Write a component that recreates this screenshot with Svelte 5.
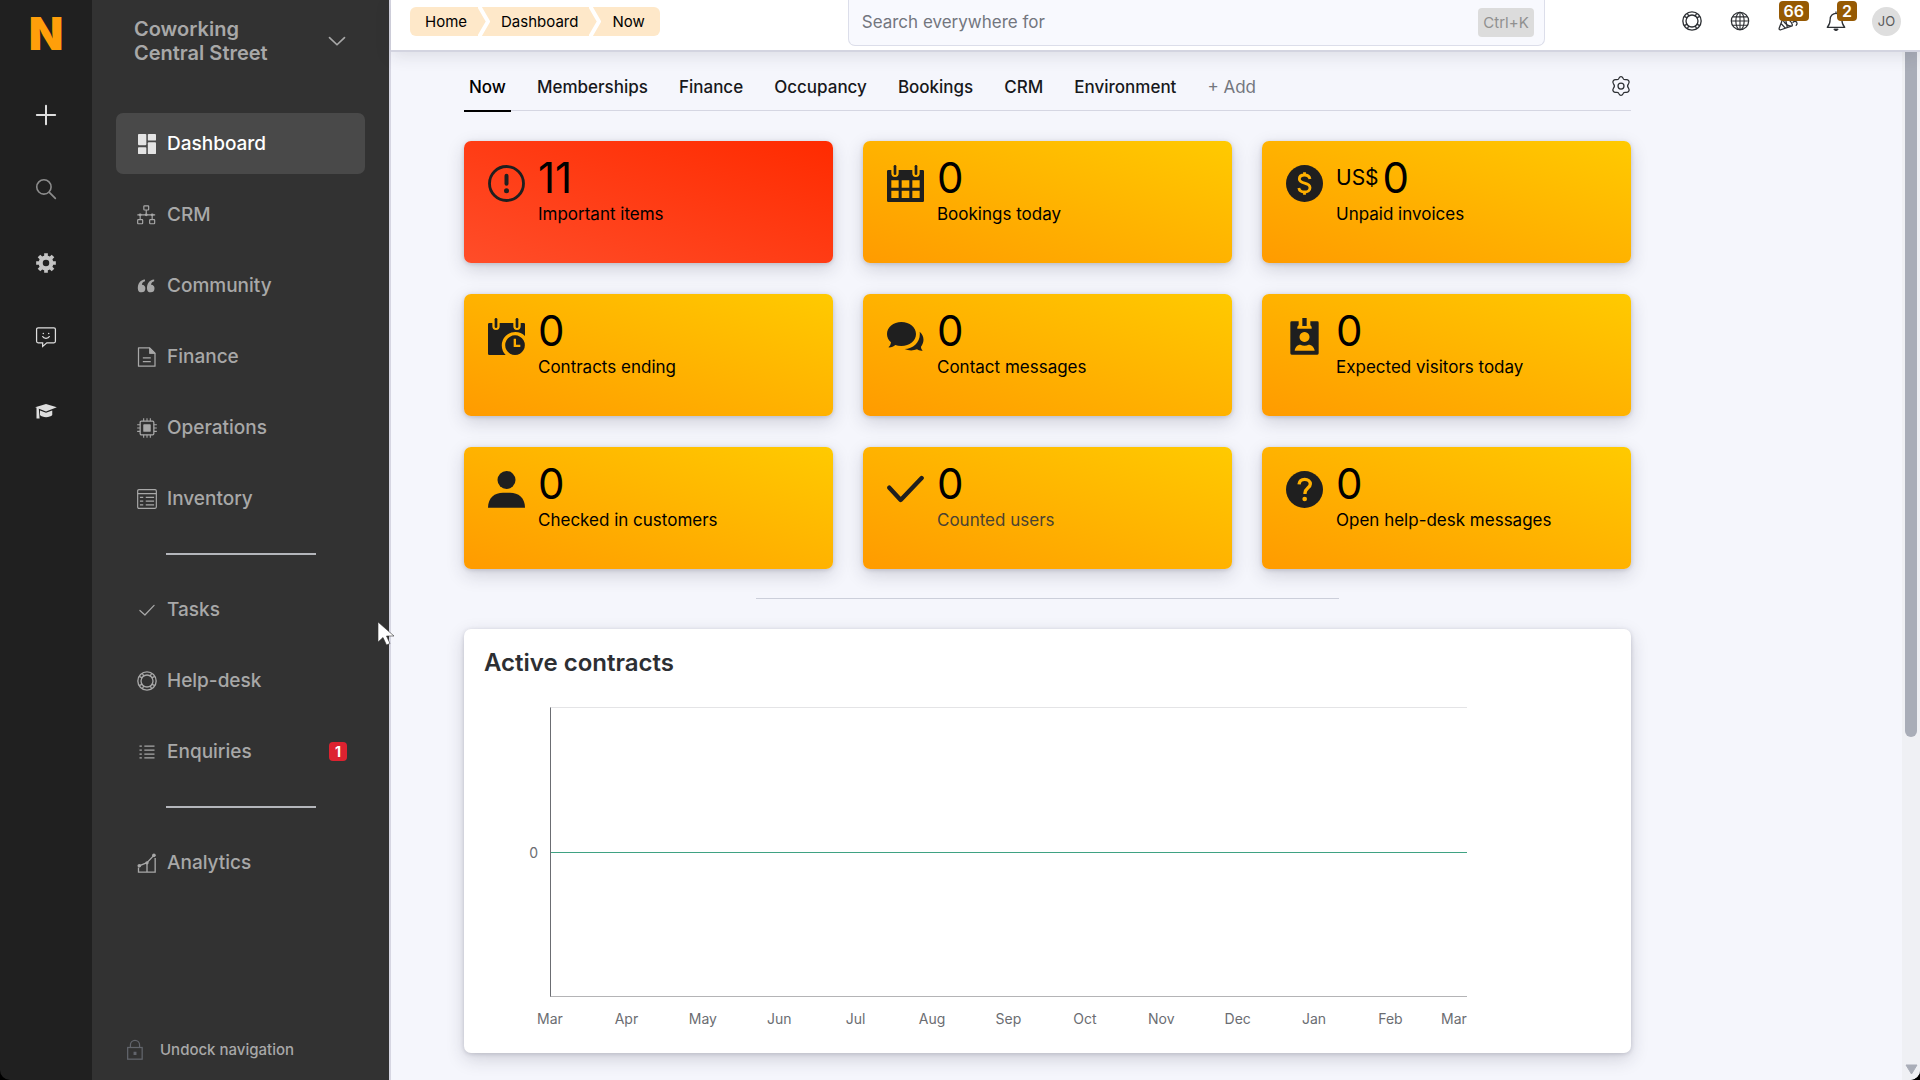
<script>
  const icons = {
    plus: '<path d="M12 1v22M1 12h22" stroke-width="2.4" stroke-linecap="round"/>',
    search: '<circle cx="9.5" cy="9.5" r="8.6" stroke-width="1.9"/><path d="M16 16l7.2 7.2" stroke-width="2" stroke-linecap="round"/>',
    gearSolid: '<circle cx="12" cy="12" r="6.4" stroke-width="5"/><path d="M12 0.200v4M12 19.800v4M0.200 12h4M19.800 12h4M3.600 3.600l2.900 2.900M17.500 17.500l2.900 2.900M3.600 20.400l2.900-2.900M17.500 6.500l2.900-2.900" stroke-width="4.400"/>',
    smile: '<path d="M2.500 1h19A1.800 1.800 0 0 1 23.300 2.800v14.400A1.800 1.800 0 0 1 21.500 19H13l-5 4.300V19H2.500A1.800 1.800 0 0 1 .7 17.200V2.800A1.800 1.800 0 0 1 2.500 1z" stroke-width="1.500"/><path d="M8 11.500c1.200 2.800 6.800 2.800 8 0" stroke-width="1.500" stroke-linecap="round"/><circle cx="8.800" cy="7.800" r=".9" fill="currentColor" stroke="none"/><circle cx="15.200" cy="7.800" r=".9" fill="currentColor" stroke="none"/>',
    cap: '<g fill="currentColor" stroke="none"><path d="M12 3.500L25 7.600 12 12.500 -1 7.600z"/><path d="M4.800 11.500l7.200 2.700 7.500-2.700v5.300c-2.500 3.400-12.200 3.400-14.700 0z"/><path d="M.6 8.500h2.700l1 12.500H.6z"/></g>',
    dashboard: '<g fill="currentColor" stroke="none"><rect x="1.200" y="0" width="10" height="13.400" rx="1"/><rect x="1.200" y="15.800" width="10" height="8.200" rx="1"/><rect x="13" y="0" width="9.800" height="7.800" rx="1"/><rect x="13" y="10" width="9.800" height="14" rx="1"/></g>',
    crm: '<g stroke-width="1.400"><rect x="8.200" y="1" width="5.800" height="5" rx=".8"/><rect x=".8" y="17.500" width="6" height="5" rx=".8"/><rect x="15.200" y="17.500" width="6" height="5" rx=".8"/><path d="M11.100 6v5.800M.4 11.800h21.400M3.800 11.800v5.700M18.200 11.800v5.700"/></g><g fill="currentColor" stroke="none"><circle cx="3.800" cy="11.800" r="1.700"/><circle cx="11.100" cy="11.800" r="1.700"/><circle cx="18.200" cy="11.800" r="1.700"/></g>',
    quote: '<g fill="currentColor" stroke="none"><path d="M9.600 4.200v2.200C7.300 7 6 8.400 5.900 10.600A4.500 4.500 0 1 1 1 15.200C.8 9.400 3.600 4.800 9.600 4.200z"/><path d="M20.600 4.200v2.200c-2.300.6-3.600 2-3.700 4.200a4.500 4.500 0 1 1-4.900 4.600C11.800 9.400 14.600 4.800 20.600 4.200z"/></g>',
    doc: '<path d="M1.800 1h13.400l6.400 6.400V23H1.800z" stroke-width="1.500" stroke-linejoin="round"/><path d="M15 1v6.800h6.600z" fill="currentColor"/><path d="M7 13h9.500M7 17.500h9.500" stroke-width="1.400"/>',
    chip: '<rect x="3.800" y="3.800" width="16.400" height="16.400" rx="1.500" stroke-width="1.500"/><rect x="7.500" y="7.500" width="9" height="9" rx="1" fill="currentColor" stroke="none"/><path d="M8 .2v3.600M12 .2v3.600M16 .2v3.600M8 20.200v3.600M12 20.200v3.600M16 20.200v3.600M.2 8h3.600M.2 12h3.600M.2 16h3.600M20.200 8h3.600M20.200 12h3.600M20.200 16h3.600" stroke-width="1.300"/>',
    table: '<rect x=".8" y=".8" width="22.400" height="22.400" rx="1.500" stroke-width="1.400"/><path d="M.8 5.600h22.400M3.500 10h4M10.500 10h10M3.500 14.500h4M10.500 14.500h10M3.500 19h4M10.500 19h10" stroke-width="1.400"/>',
    tick: '<path d="M3.500 12.500l6 5.500L20.500 6.500" stroke-width="1.500" stroke-linecap="round" stroke-linejoin="round"/>',
    buoy: '<circle cx="12" cy="12" r="11" stroke-width="1.600"/><circle cx="12" cy="12" r="7.200" stroke-width="1.600"/><path d="M2.600 6.400l3.800 1.800M6.400 2.600l1.800 3.800M21.400 6.400l-3.800 1.800M17.600 2.600l-1.800 3.800M2.600 17.600l3.800-1.800M6.400 21.400l1.800-3.800M21.400 17.600l-3.800-1.800M17.600 21.400l-1.800-3.800" stroke-width="1.600"/>',
    list: '<path d="M3 5h2.800M8.800 5H21M3 9.700h2.800M8.800 9.700H21M3 14.400h2.800M8.800 14.400H21M3 19.100h2.800M8.800 19.100H21" stroke-width="1.500"/>',
    chart: '<path d="M1.800 17.500v5.400h20V6M12 22.800V13M2.500 15.500L12 11.600l8.500-9" stroke-width="1.600"/><g fill="currentColor" stroke="none"><circle cx="2.800" cy="15.300" r="2.200"/><circle cx="12" cy="11.800" r="2"/><circle cx="20.300" cy="2.800" r="2.200"/></g>',
    lock: '<rect x="3.200" y="9" width="17.400" height="14" stroke-width="1.500"/><path d="M6.500 9V6a5.500 5.500 0 0 1 11 0v3" stroke-width="1.500"/><path d="M12 14v4" stroke-width="3.500"/>',
    chevron: '<path d="M3 8l9 8.500L21 8" stroke-width="2" stroke-linecap="round" stroke-linejoin="round"/>',
    globe: '<circle cx="12" cy="12" r="10.400" stroke-width="1.500"/><ellipse cx="12" cy="12" rx="5" ry="10.400" stroke-width="1.400"/><path d="M1.600 12h20.800M3 7h18M3 17h18M12 1.600v20.800" stroke-width="1.300"/>',
    party: '<path d="M5.500 10L1.500 20.500c-.6 1.600.5 2.600 2 2l12.700-4.300M5.500 10c2 4.400 6.200 8 10.700 8.200M5.500 10c.3-2 2-2.500 3.800-1.600 4 2 7.300 5.600 7.900 8.100.2 1-.2 1.500-1 1.700M3.600 15l5.200 5.600M18 13.500c1.500-1.500 3.500-1.200 4.500 0 .7 1 .4 2.600-.7 3.800M9.500 12l1.500 7" stroke-width="1.500" stroke-linecap="round"/>',
    bell: '<path d="M12 2.800a7 7 0 0 0-7 7c0 6-1.500 7.500-3.500 9.700h21c-2-2.200-3.500-3.700-3.500-9.700a7 7 0 0 0-7-7zM12 .5v2.300" stroke-width="1.500" stroke-linejoin="round"/><path d="M9.400 21.600a2.700 2.700 0 0 0 5.200 0z" fill="currentColor" stroke-width="1"/>',
    gear: '<circle cx="12" cy="12" r="3.600" stroke-width="1.500"/><path d="M9.700 2.500c.9-2.200 3.700-2.200 4.600 0 .5 1.500 1.700 2.200 3.200 1.900 3.200-.6 5.500 2 3.500 5-1.200 1.400-1.200 3.800 0 5.200 2 3-.3 5.600-3.500 5-1.500-.3-2.700.4-3.200 1.900-.9 2.200-3.700 2.200-4.600 0-.5-1.500-1.700-2.200-3.200-1.900-3.200.6-5.500-2-3.500-5 1.200-1.400 1.200-3.800 0-5.200-2-3 .3-5.600 3.500-5 1.500.3 2.700-.4 3.200-1.900z" stroke-width="1.500"/>'
  };

  const calendarTop = 'M4 15H13V25a11 11 0 0 0 22 0V15H76V25a11 11 0 0 0 22 0V15h9a4 4 0 0 1 4 4';
  const tileIcons = {
    alert: '<circle cx="55.500" cy="55.500" r="51" fill="none" stroke="currentColor" stroke-width="8.500"/><rect x="49.500" y="26" width="12" height="36" rx="6"/><circle cx="55.500" cy="77.500" r="7.500"/>',
    calendar: `<path fill-rule="evenodd" d="${calendarTop}V107a4 4 0 0 1-4 4H4a4 4 0 0 1-4-4V19a4 4 0 0 1 4-4zM13 46v22h22V46zM44 46v22h23V46zM76 46v22h22V46zM13 77v22h22V77zM44 77v22h23V77zM76 77v22h22V77z"/><rect x="20" y="0" width="8" height="30" rx="4"/><rect x="83" y="0" width="8" height="30" rx="4"/>`,
    calendarClock: `<path d="${calendarTop}V54A40 40 0 1 0 53 111H4a4 4 0 0 1-4-4V19a4 4 0 0 1 4-4z"/><rect x="20" y="0" width="8" height="30" rx="4"/><rect x="83" y="0" width="8" height="30" rx="4"/><path fill-rule="evenodd" d="M81 52a29.500 29.500 0 1 0 .1 0zM77 62h7v18h13v7H77z"/>`,
    chat: '<path d="M43 12c25 0 44 16 44 36S68 84 43 84c-7 0-13-1-18-3-6 5-13 8-21 7 5-4 7-8 8-15C4 66 0 57 0 48c0-20 19-36 43-36z"/><path d="M98 41c14 12 15 31 4 45 0 5 2 8 5 12-7 1-13-1-17-4-13 5-26 4-37-1 27-1 49-22 45-52z"/>',
    badge: '<path fill-rule="evenodd" d="M17 10h21v10c0 4-4 3-4 8v4h43v-4c0-5-4-4-4-8V10h21a4 4 0 0 1 4 4v92a4 4 0 0 1-4 4H17a4 4 0 0 1-4-4V14a4 4 0 0 1 4-4zM55.500 42a15 15 0 1 0 .1 0zM26 98h60c-1-10-9-18-18-18-8 4-17 4-25 0-9 0-16 8-17 18z"/><rect x="49" y="0" width="13" height="24"/>',
    person: '<circle cx="55.500" cy="27" r="27"/><path d="M0 110C0 80 20 65 45 65h21c25 0 45 15 45 45z"/>',
    check: '<path d="M7 50l34 37L104 21" fill="none" stroke="currentColor" stroke-width="13" stroke-linecap="round" stroke-linejoin="round"/>',
    dollar: '<circle cx="55.500" cy="55.500" r="55.500"/><path d="M72 42c-2-9-8-12-16.500-12C46 30 40 35 40 42c0 17 32 8 32 26 0 8-7 13-16.500 13C46 81 40 77 38.500 69M55.500 22v8M55.500 81v8" fill="none" stroke="#ffb000" stroke-width="8.500"/>',
    question: '<circle cx="55.500" cy="55.500" r="55.500"/><path d="M39 40c1-10 8-15 17-15 10 0 17 6 17 14 0 12-16 13-16 27v3" fill="none" stroke="#ffb000" stroke-width="10"/><circle cx="56" cy="84" r="7" fill="#ffb000"/>'
  };

  const railItems = [
    { icon: 'plus', label: 'Add', tone: 'bright' },
    { icon: 'search', label: 'Search', tone: 'dim' },
    { icon: 'gearSolid', label: 'Settings', tone: 'mid' },
    { icon: 'smile', label: 'Feedback', tone: 'bright' },
    { icon: 'cap', label: 'Learn', tone: 'bright' }
  ];

  const navGroups = [
    [
      { icon: 'dashboard', label: 'Dashboard', active: true },
      { icon: 'crm', label: 'CRM' },
      { icon: 'quote', label: 'Community' },
      { icon: 'doc', label: 'Finance' },
      { icon: 'chip', label: 'Operations' },
      { icon: 'table', label: 'Inventory' }
    ],
    [
      { icon: 'tick', label: 'Tasks' },
      { icon: 'buoy', label: 'Help-desk' },
      { icon: 'list', label: 'Enquiries', count: 1 }
    ],
    [{ icon: 'chart', label: 'Analytics' }]
  ];

  const crumbs = ['Home', 'Dashboard', 'Now'];
  const tabs = ['Now', 'Memberships', 'Finance', 'Occupancy', 'Bookings', 'CRM', 'Environment'];

  const tiles = [
    { icon: 'alert', value: '11', label: 'Important items', urgent: true },
    { icon: 'calendar', value: '0', label: 'Bookings today' },
    { icon: 'dollar', value: '0', label: 'Unpaid invoices', unit: 'US$' },
    { icon: 'calendarClock', value: '0', label: 'Contracts ending' },
    { icon: 'chat', value: '0', label: 'Contact messages' },
    { icon: 'badge', value: '0', label: 'Expected visitors today' },
    { icon: 'person', value: '0', label: 'Checked in customers' },
    { icon: 'check', value: '0', label: 'Counted users', muted: true },
    { icon: 'question', value: '0', label: 'Open help-desk messages' }
  ];

  const months = ['Mar', 'Apr', 'May', 'Jun', 'Jul', 'Aug', 'Sep', 'Oct', 'Nov', 'Dec', 'Jan', 'Feb', 'Mar'];
</script>

{#snippet icon(name)}
  <svg class="icon" viewBox="0 0 24 24" fill="none" stroke="currentColor" aria-hidden="true">{@html icons[name]}</svg>
{/snippet}

<div class="shell">
  <aside class="rail">
    <a class="logo" href="#home" aria-label="Home">N</a>
    {#each railItems as item}
      <button class="rail-btn {item.tone}" aria-label={item.label}>{@render icon(item.icon)}</button>
    {/each}
  </aside>

  <nav class="nav" aria-label="Main">
    <button class="location">
      <span>Coworking<br />Central Street</span>
      {@render icon('chevron')}
    </button>
    <div class="nav-list">
      {#each navGroups as group, i}
        {#if i > 0}<hr class="nav-rule" />{/if}
        {#each group as item}
          <a class="nav-item" class:active={item.active} href="#{item.label.toLowerCase()}">
            {@render icon(item.icon)}
            <span class="nav-label">{item.label}</span>
            {#if item.count}<span class="count">{item.count}</span>{/if}
          </a>
        {/each}
      {/each}
    </div>
    <button class="undock">{@render icon('lock')}Undock navigation</button>
  </nav>

  <div class="page">
    <header class="topbar">
      <div class="crumbs">
        {#each crumbs as crumb, i}
          {#if i > 0}
            <svg class="crumb-sep" viewBox="0 0 12 29" aria-hidden="true"><path d="M1 -1L10 14.500L1 30" fill="none" stroke="#fff" stroke-width="4" /></svg>
          {/if}
          <a href="#{crumb.toLowerCase()}">{crumb}</a>
        {/each}
      </div>
      <label class="search">
        <input type="search" placeholder="Search everywhere for" aria-label="Search everywhere" />
        <kbd>Ctrl+K</kbd>
      </label>
      <div class="actions">
        <button aria-label="Help">{@render icon('buoy')}</button>
        <button aria-label="Language">{@render icon('globe')}</button>
        <button aria-label="News">{@render icon('party')}<span class="pill">66</span></button>
        <button aria-label="Notifications">{@render icon('bell')}<span class="pill">2</span></button>
        <button class="avatar">JO</button>
      </div>
    </header>

    <div class="body">
      <main class="content">
        <div class="tabs">
          {#each tabs as tab, i}
            <button class="tab" class:current={i === 0}>{tab}</button>
          {/each}
          <button class="tab add">+ Add</button>
          <button class="tab-settings" aria-label="Dashboard settings">{@render icon('gear')}</button>
        </div>

        <section class="tiles">
          {#each tiles as tile}
            <a class="tile" class:urgent={tile.urgent} class:muted={tile.muted} href="#{tile.icon}">
              <svg class="tile-icon" viewBox="0 0 111 111" fill="currentColor" aria-hidden="true">{@html tileIcons[tile.icon]}</svg>
              <span class="tile-text">
                <span class="value">{#if tile.unit}<small>{tile.unit}</small>{/if}{tile.value}</span>
                <span class="tile-label">{tile.label}</span>
              </span>
            </a>
          {/each}
        </section>

        <hr class="rule" />

        <section class="panel">
          <h2>Active contracts</h2>
          <div class="chart">
            <span class="y-label">0</span>
            <div class="plot"><div class="series"></div></div>
            <div class="x-labels">
              {#each months as month}<span>{month}</span>{/each}
            </div>
          </div>
        </section>
      </main>

      <div class="scrollbar" aria-hidden="true">
        <div class="thumb"></div>
        <svg viewBox="0 0 13 11"><path d="M1 1h11L6.500 10z" fill="#a9adb8" stroke="#a9adb8" stroke-linejoin="round" /></svg>
      </div>
    </div>
  </div>

  <svg class="pointer" viewBox="0 0 18 25" aria-hidden="true"><path d="M1 1v20l5-4.500 3.500 7.500 3.500-1.500-3.500-7.500H17z" fill="#fff" stroke="#333" stroke-width=".6" /></svg>
</div>

<style>
  :global(body) {
    margin: 0;
    background: #000;
  }

  .shell {
    position: relative;
    display: flex;
    height: 100vh;
    overflow: hidden;
    border-radius: 0 0 10px 10px;
    font-family: Inter, 'Liberation Sans', sans-serif;
    color: #000;
  }

  .shell :global(*) {
    box-sizing: border-box;
  }

  button {
    margin: 0;
    padding: 0;
    border: 0;
    background: none;
    font: inherit;
    color: inherit;
  }

  a {
    color: inherit;
    text-decoration: none;
  }

  .icon {
    display: block;
    flex: none;
    width: 20px;
    height: 20px;
    overflow: visible;
  }

  .rail {
    display: flex;
    flex: none;
    flex-direction: column;
    align-items: center;
    gap: 54px;
    width: 92px;
    padding-top: 11px;
    background: #202020;
  }

  .logo {
    height: 40px;
    font-size: 45px;
    font-weight: 900;
    line-height: 46px;
    color: #ff9f0a;
  }

  .bright { color: #dedede; }
  .mid { color: #c4c4c4; }
  .dim { color: #8c8c8c; }

  .nav {
    display: flex;
    flex: none;
    flex-direction: column;
    width: 299px;
    padding: 17px 24px 18px;
    border-right: 2px solid #d6d6e2;
    background: #323232;
    color: #a8a8a8;
  }

  .location {
    display: flex;
    align-items: center;
    justify-content: space-between;
    padding: 0 18px;
    font-size: 20px;
    font-weight: 600;
    line-height: 24px;
    text-align: left;
  }

  .nav-list {
    display: flex;
    flex: 1;
    flex-direction: column;
    gap: 10px;
    padding-top: 48px;
  }

  .nav-item {
    display: flex;
    align-items: center;
    gap: 10px;
    height: 61px;
    padding: 0 18px 0 21px;
    border-radius: 7px;
    font-size: 19px;
    font-weight: 500;
  }

  .nav-item.active {
    background: #494949;
    color: #fff;
  }

  .nav-item.active .icon {
    color: #e4e4e4;
  }

  .nav-label {
    flex: 1;
  }

  .count {
    width: 18px;
    border-radius: 4px;
    background: #dd2230;
    font-size: 14px;
    font-weight: 700;
    line-height: 19px;
    text-align: center;
    color: #fff;
  }

  .nav-rule {
    width: 150px;
    height: 2px;
    margin: 14px auto;
    border: 0;
    background: #b4b6bb;
  }

  .undock {
    display: flex;
    align-items: center;
    gap: 15px;
    padding-left: 9px;
    font-size: 15px;
    font-weight: 500;
    line-height: 24px;
  }

  .undock .icon {
    color: #62656c;
  }

  .page {
    display: flex;
    flex: 1;
    flex-direction: column;
    min-width: 0;
    background: #f5f6fc;
  }

  .topbar {
    position: relative;
    display: flex;
    flex: none;
    align-items: flex-start;
    height: 52px;
    padding: 0 19px;
    border-bottom: 2px solid #d3d4e0;
    background: #fff;
    box-shadow: 0 4px 16px rgba(40, 40, 60, 0.12);
  }

  .crumbs {
    display: flex;
    flex: none;
    margin-top: 7px;
    border-radius: 6px;
    background: #fee8c9;
    font-size: 15px;
    line-height: 29px;
    overflow: hidden;
  }

  .crumbs a {
    padding: 0 11px;
  }

  .crumbs a:first-child {
    padding-left: 15px;
  }

  .crumbs a:last-child {
    padding-right: 15px;
  }

  .crumb-sep {
    width: 12px;
    height: 29px;
  }

  .search {
    display: flex;
    flex: 0 1 697px;
    align-items: center;
    height: 47px;
    margin: -1px auto 0 188px;
    padding: 0 10px 0 13px;
    border: 1px solid #dcdeea;
    border-top: 0;
    border-radius: 0 0 7px 7px;
    background: #f8f9fe;
  }

  .search input {
    flex: 1;
    min-width: 0;
    padding: 0;
    border: 0;
    outline: 0;
    background: none;
    font: inherit;
    font-size: 17px;
    line-height: 24px;
  }

  .search input::placeholder {
    color: #73767e;
    opacity: 1;
  }

  kbd {
    padding: 0 5px;
    border-radius: 4px;
    background: #dcdcdc;
    font-family: inherit;
    font-size: 15px;
    line-height: 29px;
    color: #909090;
  }

  .actions {
    display: flex;
    flex: none;
    align-items: center;
    gap: 28px;
    height: 42px;
    color: #2c2f33;
  }

  .actions button {
    position: relative;
  }

  .pill {
    position: absolute;
    right: -11px;
    bottom: 10px;
    padding: 0 5px;
    border-radius: 4px;
    background: #965a04;
    font-size: 16px;
    font-weight: 600;
    line-height: 20px;
    color: #fff;
  }

  .actions .avatar {
    width: 29px;
    height: 29px;
    margin-left: -2px;
    border-radius: 50%;
    background: #dedede;
    font-size: 13px;
    color: #5a5a5a;
  }

  .body {
    display: flex;
    flex: 1;
    min-height: 0;
  }

  .content {
    flex: 1;
    min-width: 0;
    padding: 10px 271px 0 73px;
  }

  .tabs {
    display: flex;
    gap: 21px;
    height: 49px;
    border-bottom: 1px solid #d5d6e2;
  }

  .tab {
    height: 50px;
    padding: 2px 5px 0;
    border-bottom: 2px solid transparent;
    font-size: 17px;
    font-weight: 500;
    color: #17181b;
  }

  .tab.current {
    border-color: #000;
    color: #000;
  }

  .tab.add {
    font-weight: 400;
    color: #73767e;
  }

  .tab-settings {
    align-self: center;
    margin-left: auto;
    color: #2c2f33;
  }

  .tiles {
    display: grid;
    grid-template-columns: repeat(3, 1fr);
    gap: 31px 30px;
    padding-top: 30px;
  }

  .tile {
    display: flex;
    gap: 13px;
    height: 122px;
    padding: 24px;
    border-radius: 7px;
    background: linear-gradient(to top right, #ff9b00, #ffca00);
    box-shadow: 0 6px 18px rgba(40, 40, 60, 0.18), 0 1px 4px rgba(40, 40, 60, 0.18);
  }

  .tile.urgent {
    background: linear-gradient(to top right, #ff4d29, #ff2b00);
  }

  .tile-icon {
    flex: none;
    width: 37px;
    height: 37px;
    color: #1f1f1f;
  }

  .tile-text {
    display: flex;
    flex-direction: column;
    margin-top: -11px;
  }

  .value {
    display: flex;
    align-items: center;
    gap: 4px;
    font-size: 42px;
    line-height: 48px;
  }

  .value small {
    font-size: 21px;
  }

  .tile-label {
    font-size: 17px;
    line-height: 24px;
  }

  .muted .tile-label {
    color: #4a4232;
  }

  .rule {
    width: 50%;
    height: 1px;
    margin: 29px auto 30px;
    border: 0;
    background: #cccfda;
  }

  .panel {
    padding: 20px 20px 22px;
    border-radius: 7px;
    background: #fff;
    box-shadow: 0 6px 18px rgba(40, 40, 60, 0.18), 0 1px 4px rgba(40, 40, 60, 0.18);
  }

  h2 {
    margin: 0;
    font-size: 24px;
    font-weight: 600;
    line-height: 28px;
    color: #2d2f33;
  }

  .chart {
    display: grid;
    grid-template-columns: 54px 1fr;
    column-gap: 12px;
    padding: 30px 144px 0 0;
    font-size: 14px;
    color: #6b6d72;
  }

  .y-label {
    align-self: center;
    text-align: right;
  }

  .plot {
    display: flex;
    align-items: center;
    height: 290px;
    border: 1px solid #e4e4e6;
    border-right: 0;
    border-bottom-color: #b4b4b6;
    border-left-color: #6b6d72;
  }

  .series {
    flex: 1;
    height: 1px;
    background: #3fa283;
  }

  .x-labels {
    display: flex;
    grid-column: 2;
    justify-content: space-between;
    padding-top: 10px;
    line-height: 24px;
  }

  .x-labels span {
    display: flex;
    justify-content: center;
    width: 0;
    white-space: nowrap;
  }

  .x-labels span:last-child {
    justify-content: flex-end;
  }

  .scrollbar {
    display: flex;
    flex: none;
    flex-direction: column;
    align-items: center;
    justify-content: space-between;
    width: 18px;
    padding: 0 0 5px;
    background: #eff0f4;
  }

  .thumb {
    width: 12px;
    height: 67%;
    border-radius: 0 0 6px 6px;
    background: #a9adb8;
  }

  .scrollbar svg {
    width: 13px;
    height: 11px;
  }

  .pointer {
    position: absolute;
    top: 621px;
    left: 377px;
    width: 18px;
    height: 25px;
  }
</style>
